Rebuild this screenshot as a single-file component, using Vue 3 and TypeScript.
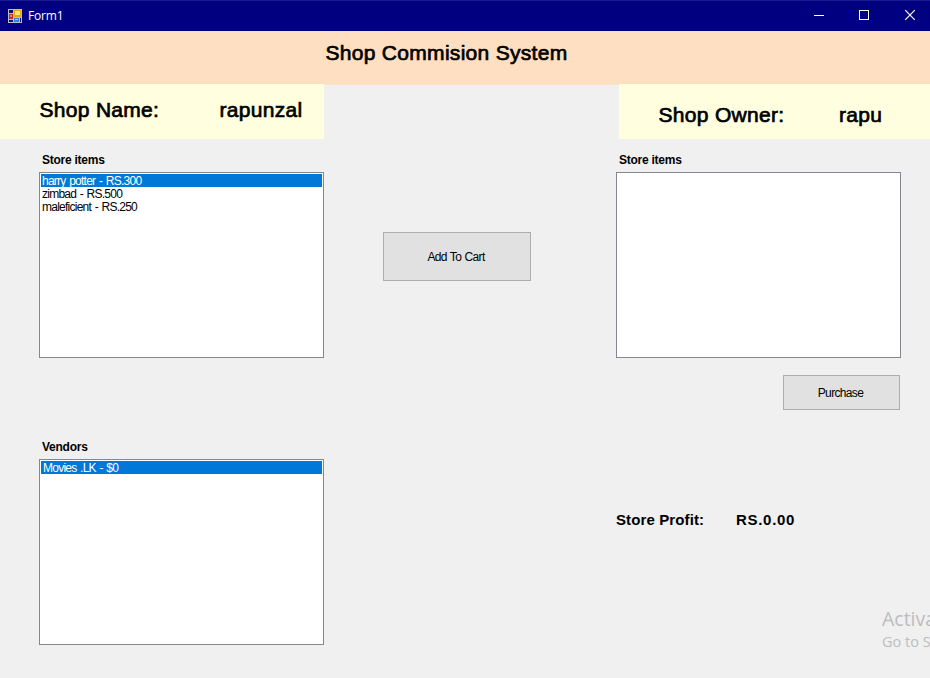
<script setup lang="ts">
import { ref } from 'vue'

interface Item {
  name: string
  price: string
}

const items = ref<Item[]>([
  { name: 'harry potter', price: 'RS.300' },
  { name: 'zimbad', price: 'RS.500' },
  { name: 'maleficient', price: 'RS.250' },
])
const vendors = ref<Item[]>([{ name: 'Movies .LK', price: '$0' }])
const cart = ref<Item[]>([])
const selectedItem = ref(0)
const selectedVendor = ref(0)
const profit = ref('RS.0.00')

function addToCart(): void {
  const item = items.value[selectedItem.value]
  if (item) cart.value.push(item)
}
</script>

<template>
  <div class="window">
    <header class="titlebar">
      <svg class="app-icon" width="14" height="14" viewBox="0 0 14 14" shape-rendering="crispEdges">
        <rect width="14" height="14" fill="#b9bdc6" />
        <rect x="1" y="1" width="4" height="3" fill="#10107a" />
        <rect x="1" y="5" width="4" height="5" fill="#c42a20" />
        <rect x="2" y="6" width="2" height="2" fill="#f08070" />
        <rect x="1" y="11" width="4" height="2" fill="#10107a" />
        <rect x="6" y="1" width="7" height="7" fill="#e5a800" />
        <rect x="7" y="2" width="5" height="4" fill="#ffe477" />
        <rect x="6" y="9" width="5" height="4" fill="#3d7fe0" />
        <rect x="7" y="10" width="3" height="1" fill="#9cc7ff" />
        <rect x="12" y="9" width="1" height="4" fill="#10107a" />
      </svg>
      <span class="caption">Form1</span>
      <svg class="controls" width="112" height="30" viewBox="0 0 112 30" fill="none" stroke="#fff">
        <path d="M6 15.5H16M51.5 10.5h9v9h-9z" shape-rendering="crispEdges" />
        <path d="M97.2 10.2l9.6 9.6M106.8 10.2l-9.6 9.6" stroke-width="1.2" />
      </svg>
    </header>

    <div class="banner"><h1 class="heading">Shop Commision System</h1></div>

    <main class="content">
      <section class="left">
        <div class="panel">
          <span class="heading shop-label">Shop Name:</span>
          <span class="heading">rapunzal</span>
        </div>
        <h2 class="label">Store items</h2>
        <ul class="list">
          <li
            v-for="(item, i) in items"
            :key="item.name"
            :class="{ selected: i === selectedItem }"
            @click="selectedItem = i"
          >{{ item.name }} - {{ item.price }}</li>
        </ul>
        <h2 class="label vendors">Vendors</h2>
        <ul class="list vendor-list">
          <li
            v-for="(vendor, i) in vendors"
            :key="vendor.name"
            :class="{ selected: i === selectedVendor }"
            @click="selectedVendor = i"
          >{{ vendor.name }} - {{ vendor.price }}</li>
        </ul>
      </section>

      <section class="middle">
        <button class="button add" @click="addToCart">Add To Cart</button>
      </section>

      <section class="right">
        <div class="panel owner">
          <span class="heading owner-label">Shop Owner:</span>
          <span class="heading">rapu</span>
        </div>
        <h2 class="label cart-label">Store items</h2>
        <ul class="list cart">
          <li v-for="(item, i) in cart" :key="i">{{ item.name }} - {{ item.price }}</li>
        </ul>
        <button class="button purchase">Purchase</button>
        <div class="profit">
          <span class="profit-label">Store Profit:</span>
          <span class="profit-value">{{ profit }}</span>
        </div>
      </section>
    </main>

    <aside class="watermark">
      <div class="activate">Activa</div>
      <div class="settings">Go to S</div>
    </aside>
  </div>
</template>

<style>
body {
  margin: 0;
}
</style>

<style scoped>
.window {
  position: relative;
  width: 930px;
  height: 678px;
  overflow: hidden;
  background: #f0f0f0;
  color: #000;
  font-family: 'Liberation Sans', Arial, sans-serif;
}
.titlebar {
  display: flex;
  align-items: center;
  box-sizing: border-box;
  height: 31px;
  padding-left: 8px;
  border-top: 1px solid #1a1a8c;
  background: #000080;
  color: #fff;
}
.app-icon {
  display: block;
  margin-bottom: 1px;
}
.caption {
  margin-left: 6px;
  font: 12px/16px 'Open Sans', sans-serif;
  letter-spacing: -0.2px;
}
.controls {
  display: block;
  margin: -2px 10px 0 auto;
}
.banner {
  display: flex;
  justify-content: center;
  box-sizing: border-box;
  height: 54px;
  padding: 10px 37px 0 0;
  background: #ffdfc1;
}
.heading {
  margin: 0;
  font-size: 21px;
  font-weight: 400;
  line-height: 24px;
  letter-spacing: 0.3px;
  white-space: nowrap;
  -webkit-text-stroke: 0.7px #000;
}
.content {
  display: grid;
  grid-template-columns: 324px 292px 314px;
  margin-top: -1px;
}
.left,
.right {
  display: flex;
  flex-direction: column;
}
.panel {
  display: flex;
  box-sizing: border-box;
  height: 55px;
  padding: 14px 0 0 39.5px;
  background: #ffffe0;
}
.shop-label {
  width: 180px;
}
.owner {
  margin-left: 3px;
  padding-top: 19px;
}
.owner-label {
  width: 180.5px;
}
.label {
  margin: 14px 0 0 42px;
  font-size: 12px;
  line-height: 14px;
  letter-spacing: -0.25px;
  font-weight: 700;
}
.cart-label {
  margin-left: 3px;
}
.list {
  box-sizing: border-box;
  width: 285px;
  height: 186px;
  margin: 5px 0 0 39px;
  padding: 1px;
  border: 1px solid #828790;
  background: #fff;
  list-style: none;
  font-size: 12px;
  line-height: 15px;
  letter-spacing: -0.75px;
  word-spacing: 1px;
}
.list li {
  height: 13px;
  padding-left: 1px;
  white-space: nowrap;
}
.list .selected {
  background: #0078d7;
  color: #fff;
}
.vendors {
  margin-top: 82px;
}
.vendor-list li {
  padding-left: 2px;
}
.cart {
  margin-left: 0;
}
.button {
  box-sizing: border-box;
  padding: 0 2px 0 0;
  border: 1px solid #adadad;
  background: #e1e1e1;
  color: #000;
  font-family: inherit;
  font-size: 12px;
  letter-spacing: -0.65px;
  word-spacing: 0.6px;
}
.add {
  width: 148px;
  height: 49px;
  margin: 148px 0 0 59px;
}
.purchase {
  width: 117px;
  height: 35px;
  margin: 17px 0 0 167px;
}
.profit {
  display: flex;
  margin-top: 101px;
  font-size: 15px;
  line-height: 18px;
  font-weight: 700;
}
.profit-label {
  width: 120px;
  letter-spacing: 0.12px;
}
.profit-value {
  letter-spacing: 0.7px;
}
.watermark {
  position: absolute;
  top: 606px;
  left: 882px;
  color: #bdbdbd;
  font-family: 'Open Sans', sans-serif;
  white-space: nowrap;
}
.activate {
  font-size: 19.5px;
  line-height: 26px;
}
.settings {
  font-size: 14.5px;
  line-height: 20px;
}
</style>
